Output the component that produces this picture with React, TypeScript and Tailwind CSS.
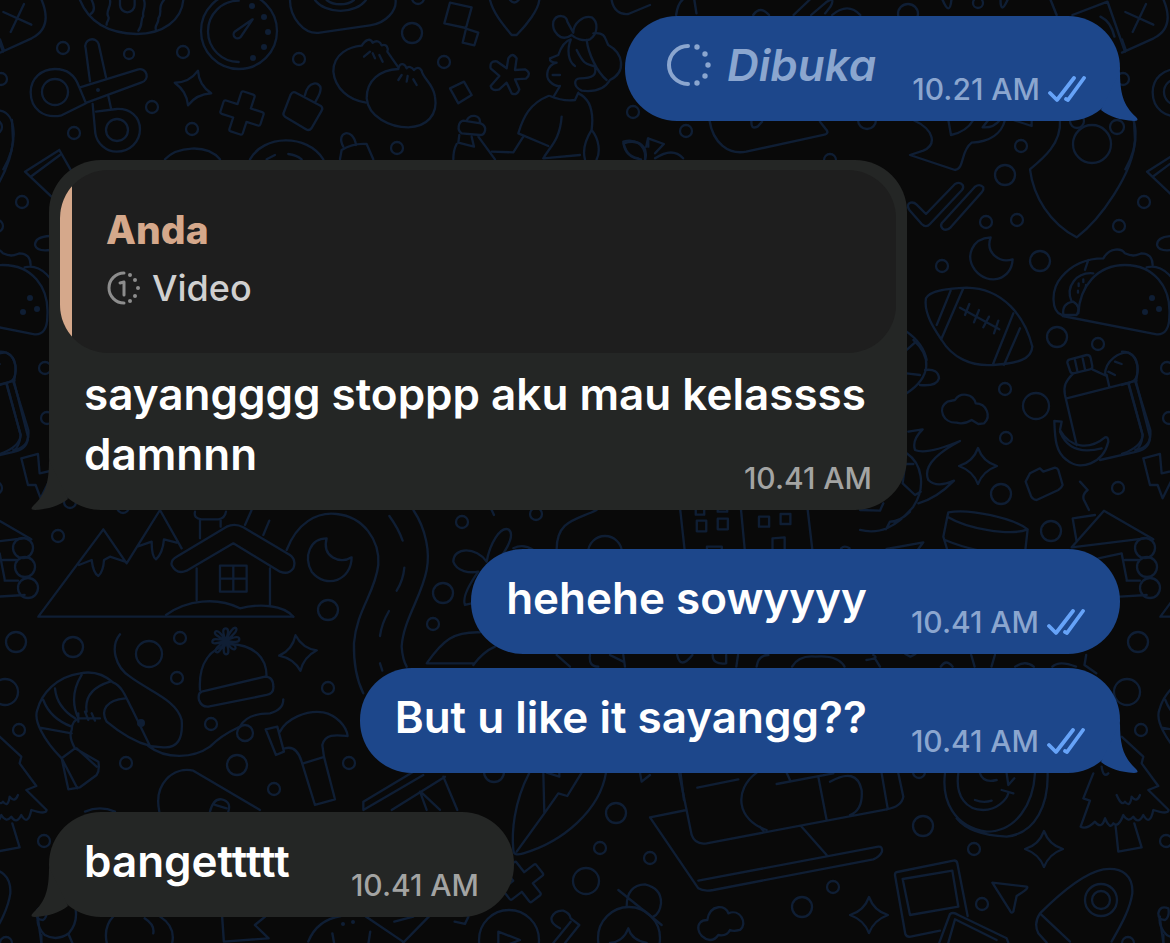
import type { ReactNode } from "react";

type Side = "in" | "out";

interface BubbleProps {
  side: Side;
  tail?: boolean;
  children: ReactNode;
}

interface MessageProps {
  text: string;
  time: string;
  side: Side;
  tail?: boolean;
}

const DOTS: [number, number, number][] = [
  [63, 48, 6], [129, 54, 5], [183, 52, 6], [299, 59, 6], [1, 79, 6], [152, 107, 6], [74, 133, 6], [192, 129, 6],
  [412, 33, 10], [444, 62, 6], [397, 148, 6], [633, 112, 6], [418, -2, 6], [686, 131, 6], [978, 3, 5], [908, 14, 10],
  [867, 120, 9], [830, 160, 6], [1021, 146, 6], [1005, 175, 10], [1092, 144, 19], [1077, 121, 7], [1117, 127, 7],
  [1144, 202, 6], [1119, 226, 6], [986, 222, 6], [1017, 220, 6], [942, 266, 6], [1040, 261, 10], [1057, 337, 10],
  [1098, 344, 6], [1005, 389, 6], [1036, 406, 13], [1006, 438, 6], [1001, 494, 10], [1118, 488, 6], [1051, 531, 10],
  [1167, 368, 6], [1169, 418, 6], [1145, 548, 10], [1147, 567, 10], [1150, 588, 10], [58, 536, 6], [328, 610, 10],
  [16, 642, 10], [73, 647, 10], [149, 654, 13], [180, 638, 6], [177, 678, 6], [328, 688, 6], [5, 692, 13],
  [19, 730, 6], [211, 724, 6], [126, 763, 6], [237, 765, 10], [274, 789, 6], [349, 763, 6], [245, 733, 8],
  [70, 502, 6], [123, 507, 6], [462, 522, 6], [536, 514, 6], [443, 593, 10], [433, 624, 6], [494, 772, 10],
  [616, 813, 10], [605, 553, 17], [600, 848, 6], [650, 858, 6], [586, 881, 13], [833, 887, 6], [802, 907, 10],
  [923, 826, 10], [974, 849, 6], [982, 904, 6], [919, 772, 6], [44, 841, 6], [6, 943, 6],
];

const STARS = [
  "translate(193 88) rotate(16)",
  "translate(978 466)",
  "translate(298 653) rotate(-8)",
  "translate(869 915)",
  "translate(1044 849)",
];

const PLUSES = ["translate(242 113) rotate(18)", "translate(523 882) rotate(52)"];

// Every sheet is drawn at three times its size and scaled down in place.
const SHEETS: { at: string; d: string[] }[] = [
  {
    at: "translate(0 0) scale(.3333)",
    d: [
      "M10 36 94 74M72 12 32 96M125 0C150 60 135 95 95 115L0 158M0 118 12 152",
      "M240 0C270 75 340 100 410 102 490 102 545 60 550 0M275 0Q290 30 272 42M330 0C335 20 315 35 325 50 330 60 318 65 320 74M432 0C440 20 425 35 430 48 420 60 430 75 415 92M492 0C470 25 490 35 475 55 478 70 462 75 468 90M360 0V15A22 22 0 0 0 404 15V0",
      "M716 2A92 92 0 0 0 716 186M758 58 704 95A12 12 0 0 0 722 111Z",
      "M870 0C870 50 910 105 960 98L1110 76C1160 70 1190 30 1187 0M945 0A86 60 0 0 0 1098 0M980 0A50 30 0 0 0 1062 0",
      "M258 310 185 346C130 358 92 325 92 277 92 235 125 207 165 207 200 207 225 225 237 260ZM240 262 415 208A20 20 0 0 1 425 247L260 308M270 244 257 145A20 20 0 0 1 296 132L318 232M278 312 286 400A66 66 0 0 0 350 455C390 455 420 425 420 388 420 350 390 325 350 327L288 335M325 288 333 325",
      "M885 277 963 318Q970 325 965 332L935 384Q928 394 918 388L855 350Q847 344 852 336L872 284Q878 274 885 277ZM915 285C925 240 960 245 962 265 962 285 950 295 945 308",
      "M495 478C530 440 620 430 660 478M750 478C790 405 920 400 970 478M800 478 825 465M865 462Q890 465 905 478",
      "M1030 440C1005 395 1060 380 1068 435M1020 478 1025 450C1050 435 1075 430 1100 432L1120 478",
      "M0 332C50 340 55 430 10 508",
    ],
  },
  {
    at: "translate(330 0) scale(.3333)",
    d: [
      "M360 8 425 22 408 84 343 70ZM408 86 445 98 433 136 398 128ZM402 245 425 285 385 310 360 265Z",
      "M480 0C490 40 520 75 545 105H560C590 75 625 30 628 0M540 0Q553 15 566 0",
      "M108 308C55 300 15 265 10 215 10 160 60 140 95 137 105 120 120 112 128 128 140 120 150 124 155 136 170 130 176 145 172 155L205 202M120 155 102 170M128 160 135 175M148 165 158 185",
      "M205 207C150 210 110 240 110 295 115 350 180 382 235 382 290 380 325 345 315 290 310 250 278 235 275 212 268 200 258 202 252 210 245 200 235 198 230 205 222 186 208 190 205 207M215 225 205 240M233 228 230 245M250 238 260 255",
      "M530 205 535 175Q547 155 560 175L555 210 585 208Q607 220 588 236L555 238 568 268Q562 288 545 280L530 248 508 268Q485 275 482 258L508 228 482 205Q478 182 500 184Z",
      "M725 105C690 130 665 90 670 65 680 40 710 45 712 65L730 98C730 70 760 45 785 52 805 65 805 100 780 118 760 125 735 115 725 105M722 118C700 125 690 150 685 165L660 175Q658 188 680 188C650 195 645 230 660 245Q675 260 690 258L672 288",
      "M790 100C830 95 825 120 835 135 880 160 890 215 840 240 820 275 780 275 755 272 730 260 730 235 750 235 790 235 800 225 795 200 770 190 765 200 740 150M770 120C775 160 800 215 830 240M722 120C710 150 715 185 735 198M668 225H690",
      "M660 288Q700 305 735 300L745 278M655 288C600 310 580 350 565 400L655 438M745 280C790 300 790 350 785 390 760 430 760 460 765 478M785 390C810 420 810 460 800 478M695 350C690 420 660 440 640 475L750 465M580 410 550 457 485 455",
      "M400 362 452 370C475 380 465 405 450 405L395 400C380 390 385 365 400 362M410 362C420 340 450 345 450 365M388 405 385 428 432 440 425 410M370 478Q370 450 380 432M445 410 495 478",
      "M880 425C910 415 950 430 945 478M880 425C885 450 895 470 925 475M955 415V440M845 0C850 30 870 45 895 42L960 15",
    ],
  },
  {
    at: "translate(620 0) scale(.3507 .3333)",
    d: [
      "M160 45Q165 10 178 0M212 0 218 40M495 45 540 0M545 45 590 5Q615 -10 600 20L585 40M605 45Q650 5 685 45M380 45Q400 15 425 45M920 0Q940 50 945 0M1085 0Q1085 45 1105 0M1228 0 1245 45M1290 45 1390 5 1440 155M1370 50Q1400 65 1410 110",
      "M255 360C265 430 310 465 360 455L580 405Q600 400 585 385L570 365M375 360Q372 390 392 380L405 365",
      "M10 430C55 415 80 440 72 478M10 430C15 465 35 475 60 478M75 440 80 415 125 432 100 460M100 475Q150 440 180 475",
    ],
  },
  {
    at: "translate(0 150) scale(.3333)",
    d: [
      "M178 0 75 65 160 145M180 15 95 78M178 0 215 65M150 258Q105 260 105 285 110 305 150 300",
      "M0 605Q45 605 47 660 45 695 25 697L0 705M20 700 62 855Q60 890 0 912M40 695 85 840Q90 895 40 900",
    ],
  },
  {
    at: "translate(880 120) scale(.3333)",
    d: [
      "M100 0C165 30 170 75 130 92L90 105 225 150C255 145 240 95 275 68 330 65 365 40 375 0M205 0 213 45Q260 35 280 0M325 0 308 22Q340 25 360 0M400 0 455 18V0",
      "M88 270Q78 252 92 248 102 246 110 254L138 282 225 192Q240 184 248 195 252 202 246 210L150 312Q138 325 125 312ZM185 310 285 200Q300 190 310 202 312 210 306 216L212 322Q200 334 188 326 180 318 185 310Z",
      "M540 0C545 70 490 115 450 148 460 230 510 310 590 352 660 300 760 160 765 60L762 0",
      "M332 352C275 355 255 410 285 450 325 500 395 480 398 418 360 430 315 400 332 352Z",
      "M138 535C150 510 210 505 260 503 370 505 435 590 457 680 455 720 410 730 340 735 270 740 215 710 185 660 165 630 130 580 138 535ZM212 512 170 615M250 505 185 655M400 580 338 735M420 625 372 735M240 563 358 628M268 552 255 585M297 570 282 607M327 590 310 622M355 602 342 640",
      "M545 585C515 575 510 510 545 470 580 430 620 415 670 415 690 380 725 385 735 400 760 412 770 405 785 400 815 400 818 425 818 435M548 588 830 643C855 645 868 625 868 590M595 580C600 500 650 435 735 435 820 435 875 500 868 590M800 442C850 430 890 480 905 530M615 450 625 420",
      "M575 545C555 500 590 455 640 460M550 585Q545 550 580 545 605 560 590 585ZM596 490V498M610 478V486M594 512V518M618 495V500",
      "M80 635Q130 670 140 720M80 690 108 665",
    ],
  },
  {
    at: "translate(860 340) scale(.3333)",
    d: [
      "M160 0C215 50 215 110 140 160M140 100 180 105M195 90Q235 85 237 115 230 140 180 135",
      "M290 248C250 250 230 205 262 185L285 180C300 155 340 160 347 190 380 190 395 230 372 250L355 252 335 240Q310 255 290 248Z",
      "M630 58 680 45Q690 44 692 54L697 78Q698 86 690 88L640 100Q632 100 630 92L622 68Q622 60 630 58ZM645 60 652 92M668 55 675 88M640 100C615 125 610 140 615 165L650 315M697 88 740 108M620 175 830 122M735 105C735 60 780 35 805 38 840 55 835 90 828 125M740 105 748 140M765 65 785 72M745 95 765 105M805 130 848 285Q845 320 825 335M828 125 870 290Q870 325 830 335L720 360",
      "M583 243 605 245 600 270C630 325 690 330 735 292Q745 290 745 305C730 370 660 395 620 360 585 335 585 290 583 243M600 275Q630 350 725 325",
      "M145 275 188 268Q155 300 165 330 200 345 300 303C220 345 190 385 205 420Q230 445 282 422 230 475 175 490M140 340C185 370 200 440 160 500 110 560 60 585 0 570M128 430 165 465 182 455M135 375 128 430M140 372H160M0 510 60 512 70 490M78 568 90 545Q120 545 150 515",
      "M497 425 510 400 540 385 550 395 585 383Q592 384 595 390L608 435Q605 444 595 450L530 480Q515 480 510 460Z",
      "M660 425 683 450Q665 465 672 480L687 510M850 355 900 342 905 400 950 390 908 475 893 435H870Z",
      "M265 517C330 505 460 535 503 568 450 590 320 565 262 530ZM262 530 250 590 262 630M503 568 495 640M255 600Q350 640 490 650M80 627 190 607 175 627",
      "M638 535 705 525M638 535 650 605M635 622 732 512 880 598M635 622 855 595M715 655 785 640 800 718M795 660H835M800 722H840M780 770 860 765",
    ],
  },
  {
    at: "translate(0 500) scale(.3333)",
    d: [
      "M880 350H115L310 88 380 190 480 30 545 145M237 195 275 180Q280 220 295 228 310 215 312 180L330 170 375 185M412 140 455 125Q455 170 468 178 488 160 492 118L530 128",
      "M600 115V60M585 35Q580 55 605 58H655Q675 55 678 35M662 60V80M530 170 680 80Q705 68 730 82L870 165Q890 180 880 205 865 225 840 215L700 130 560 212Q530 225 515 195 512 180 530 170ZM590 205V300M810 205V315M660 197H740V275H660ZM700 197V275M660 236H740M498 345C560 300 650 290 720 325 780 310 850 315 880 350M755 30 735 75M808 62 790 105",
      "M860 150C890 70 950 35 1010 42 1090 50 1140 120 1135 195 1125 280 1070 330 1062 430Q1060 520 1090 580",
      "M980 115C930 115 910 170 935 215 980 270 1055 240 1055 172 1020 195 965 170 980 115Z",
      "M360 403C330 440 345 500 390 530 450 575 530 600 545 660 550 720 530 745 490 742L445 738C500 780 580 775 630 740 670 700 700 690 720 680 735 650 770 640 810 640Q850 630 850 598",
      "M185 775C130 720 100 660 112 630 125 580 170 530 240 520 290 510 320 530 340 548 370 560 380 600 395 625L450 738C400 725 350 690 320 665 300 630 320 600 375 595M185 775 225 745 295 785Q300 810 290 825L240 862 205 868ZM185 775 232 865M230 745 290 800M225 745Q205 710 215 690 215 660 240 655L300 655M120 683 215 700M130 600Q150 655 215 680M165 565Q170 620 225 655M245 525Q205 590 235 655M330 545Q250 570 260 635M235 640V665M255 635 265 660M275 640 285 662",
      "M600 570C595 490 630 445 690 432 760 435 800 470 800 530M605 575 795 530Q820 530 820 560 822 580 800 585L625 620Q605 622 597 600 593 580 605 575",
      "M677 422C667 395 668 385 677 385 686 385 687 395 677 422 690 395 700 380 708 384 714 390 700 408 677 422 705 410 718 408 718 417 718 428 705 428 677 422 698 430 712 440 705 447 698 452 688 440 677 422 687 448 688 462 679 463 670 463 668 448 677 422 665 445 655 462 648 456 642 450 655 435 677 422 650 432 637 432 637 425 637 415 650 416 677 422 655 410 640 402 646 395 653 389 665 402 677 422",
      "M797 688 832 680 852 755 828 765ZM840 695C860 655 920 630 970 637 1010 645 1040 680 1043 708 1010 705 975 700 967 735L972 770 1005 898 945 915 905 785Q890 735 855 745M910 790 968 772",
      "M478 935C460 850 520 800 580 812L780 930M630 935Q640 895 665 898 695 905 685 935M645 915 680 925M255 935Q300 915 345 935",
    ],
  },
  {
    at: "translate(330 500) scale(.3333)",
    d: [
      "M250 30C290 90 300 160 290 210 275 290 220 360 215 440Q218 480 230 500M178 48Q205 85 218 122M223 203Q220 240 200 272M177 333Q155 370 150 408M150 490 157 512",
      "M470 185C480 130 510 80 535 88 560 105 520 170 485 200M470 185C440 140 370 140 370 185 380 215 420 220 445 215 420 250 395 290 405 315L425 310M550 145Q580 130 610 150M680 148C680 60 740 60 800 30M485 30 492 45",
      "M430 490H290C340 420 370 395 450 397M430 495Q460 455 495 440M680 465 720 500M780 465Q775 500 805 500M880 465 885 500M840 465 880 485",
      "M100 930V905L250 815M100 930 280 825M185 930 345 830M340 830 382 930M270 875 290 930M275 878 330 930",
    ],
  },
  {
    at: "translate(640 480) scale(.338 .3333)",
    d: [
      "M118 80 132 210M298 80 310 210M495 80 510 210M168 122H196V154H168ZM230 116H260V148H230ZM352 110H382V140H352ZM416 102H445V132H416ZM165 85V104H190V90M230 85V95H258V85M392 175 428 172V208M392 175V208M198 210V200H242V210M595 205Q605 195 620 205",
      "M110 525Q120 570 155 525M215 525Q215 555 255 550V525M290 525 285 560M345 560Q350 525 380 525M450 560Q470 525 520 530 585 525 605 560M670 540Q710 535 690 525M695 535 710 560M785 522 800 530 815 522M980 525 990 560M1050 525 1040 560M890 560Q905 535 925 560M1110 560Q1140 540 1165 560M1220 560Q1240 540 1290 560M1320 525 1315 555 1350 580",
      "M120 880 130 960",
    ],
  },
  {
    at: "translate(480 760) scale(.3333)",
    d: [
      "M148 38C100 130 95 220 100 270Q100 290 130 280C250 245 360 150 378 38M190 38 193 160 235 100 262 108 305 38M110 275 193 160M200 38 238 50V38",
      "M55 515 120 540 55 565ZM240 505Q210 490 215 472 225 450 250 452 270 460 272 475L298 495 255 549M220 549 272 485",
      "M440 440Q440 375 495 373 545 385 543 430 540 460 520 470M415 390 545 495M390 549Q430 545 445 505 455 540 500 549",
      "M690 540C650 535 640 480 682 480 690 430 740 435 745 460 780 445 805 490 780 510Q760 515 750 510 740 530 715 525 705 540 690 540Z",
      "M597 38 635 225Q645 255 680 250L1220 148M620 150 510 172 655 385Q670 395 700 390L1180 298Q1200 290 1206 275 1208 258 1195 260L655 362M965 200 1040 285M652 83 775 58M830 38C760 90 770 180 860 210M840 200 850 212M890 72 1060 40M1015 50 1040 180M1050 65Q1130 20 1145 90 1150 150 1110 165M480 38 485 65 510 45M920 38 930 60",
    ],
  },
  {
    at: "translate(820 760) scale(.3333)",
    d: [
      "M185 40 203 145M235 40 250 110Q245 140 200 148M375 40C365 120 400 200 500 215 590 215 640 130 645 40M410 175Q450 225 560 230C650 220 685 130 683 40M415 40C405 110 440 150 490 150 530 150 560 120 565 100M480 40Q490 70 530 60M465 120Q490 130 515 122M560 40 565 75 583 55M545 90 580 100",
      "M905 -70 970 -10 965 10 1015 78 985 90 1046 150Q1045 165 1000 150 990 200 970 165 955 195 940 170 925 190 910 165 895 205 880 190 870 210 855 175 845 210 825 185 800 210 782 200L810 122 790 115 820 40M887 200 895 275 965 262 943 190M890 105Q905 140 915 125 930 145 935 110 950 130 960 105M845 20Q850 55 865 40",
      "M443 468 412 310Q410 300 400 302L232 336Q224 338 225 346L256 522Q260 532 272 530L360 512M248 357 397 332 415 440 270 465ZM358 548 390 462Q400 455 415 465L560 535 565 548M385 548 405 478 530 540",
      "M517 368 620 380Q630 384 590 408L580 455Q575 462 570 452Z",
      "M875 545C900 500 930 450 937 400 940 350 910 320 850 328 790 340 720 400 660 460L750 545M660 460Q640 490 655 520L680 548",
      "M1020 475 1030 548M1015 460Q1020 435 1045 445 1050 470 1035 480 1015 480 1015 460",
    ],
  },
  {
    at: "translate(0 760) scale(.3444 .3333)",
    d: [
      "M110 470Q105 500 130 525 165 545 200 520 225 490 220 450M120 525V549M200 525 210 549M310 549Q300 500 330 468M420 475Q450 495 445 520M465 470Q510 500 500 549",
      "M645 470 650 545 780 535 740 495 770 470M895 545Q920 480 990 468M1060 468 1170 545M1145 485 1200 470M1170 549 1245 470M965 520 970 549M1075 515 1070 549M1320 485 1350 492 1360 470",
    ],
  },
];

function Wallpaper() {
  return (
    <svg
      aria-hidden="true"
      viewBox="0 0 1170 943"
      preserveAspectRatio="xMidYMin slice"
      className="absolute inset-0 h-full w-full"
      fill="none"
      stroke="#0f1e34"
      strokeLinecap="round"
      strokeLinejoin="round"
    >
      <g id="doodles" strokeWidth="2.3">
        {SHEETS.map((sheet) => (
          <g key={sheet.at} transform={sheet.at} strokeWidth="7">
            {sheet.d.map((d) => (
              <path key={d} d={d} />
            ))}
          </g>
        ))}
        {DOTS.map(([x, y, r]) => (
          <circle key={`${x}-${y}`} cx={x} cy={y} r={r} />
        ))}
        {STARS.map((at) => (
          <path key={at} transform={at} d="M0-18Q5-4 19 0 5 5 0 18-5 5-19 0-5-4 0-18Z" />
        ))}
        {PLUSES.map((at) => (
          <path
            key={at}
            transform={at}
            d="M-5-21H5Q7-21 7-19V-7H19Q21-7 21-5V5Q21 7 19 7H7V19Q7 21 5 21H-5Q-7 21-7 19V7H-19Q-21 7-21 5V-5Q-21-7-19-7H-7V-19Q-7-21-5-21Z"
          />
        ))}
        <circle cx="55" cy="92" r="13" />
        <circle cx="117" cy="130" r="11" />
        <circle cx="239" cy="31" r="38" />
        <circle cx="509" cy="940" r="30" />
        <circle cx="629" cy="938" r="31" />
        <circle cx="1101" cy="900" r="16" />
        <circle cx="1101" cy="900" r="9" />
        <g fill="#0f1e34" stroke="none">
          <circle cx="252" cy="6" r="3" />
          <circle cx="264" cy="17" r="3" />
          <circle cx="268" cy="32" r="3" />
          <circle cx="264" cy="47" r="3" />
          <circle cx="253" cy="58" r="3" />
          <circle cx="98" cy="90" r="2" />
          <circle cx="1152" cy="298" r="3" />
          <circle cx="1145" cy="312" r="3" />
          <circle cx="1159" cy="309" r="3" />
          <circle cx="141" cy="723" r="4" />
          <circle cx="343" cy="924" r="2" />
          <circle cx="353" cy="922" r="2" />
        </g>
      </g>
      <use href="#doodles" x="1122" />
      <use href="#doodles" x="-1122" />
    </svg>
  );
}

function Tail({ side }: { side: Side }) {
  return (
    <svg
      aria-hidden="true"
      viewBox="0 0 42 50"
      className={
        side === "out"
          ? "absolute -right-5 bottom-0 h-[50px] w-[42px] fill-[#1d478b]"
          : "absolute -left-5 bottom-0 h-[50px] w-[42px] -scale-x-100 fill-[#242625]"
      }
    >
      <path d="M22 0C22 22 25 34 38 46Q42 50 36 50C22 49 12 46 3 39Z" />
    </svg>
  );
}

function Bubble({ side, tail, children }: BubbleProps) {
  return (
    <li
      className={
        side === "out"
          ? "relative max-w-[858px] min-w-[465px] self-end rounded-[52px] bg-[#1d478b]"
          : "relative max-w-[858px] min-w-[465px] self-start rounded-[52px] bg-[#242625]"
      }
    >
      {children}
      {tail && <Tail side={side} />}
    </li>
  );
}

function Ticks() {
  return (
    <svg
      role="img"
      aria-label="Dibaca"
      viewBox="0 0 38 27"
      className="h-[27px] w-[38px]"
      fill="none"
      stroke="#66a3f8"
      strokeWidth="3.8"
      strokeLinecap="round"
      strokeLinejoin="round"
    >
      <path d="M2 17 9 24 26 2M18 23 20 24 36 2" />
    </svg>
  );
}

function Stamp({ time, side }: { time: string; side: Side }) {
  return (
    <span className="flex shrink-0 items-center gap-2">
      <time
        className={
          side === "out"
            ? "text-[30px] leading-9 font-medium text-[#8ba6cf]"
            : "text-[30px] leading-9 font-medium text-[#a3a4a3]"
        }
      >
        {time}
      </time>
      {side === "out" && <Ticks />}
    </span>
  );
}

function OpenedIcon() {
  return (
    <svg aria-hidden="true" viewBox="0 0 44 44" className="size-11 shrink-0" fill="#8ba6cf">
      <path d="M21 3A19 19 0 0 0 21 41" fill="none" stroke="#8ba6cf" strokeWidth="4" strokeLinecap="round" />
      <circle cx="30" cy="4" r="2.7" />
      <circle cx="38" cy="11" r="2.7" />
      <circle cx="41" cy="22" r="2.7" />
      <circle cx="38" cy="33" r="2.7" />
      <circle cx="30" cy="40" r="2.7" />
    </svg>
  );
}

function ViewOnceIcon() {
  return (
    <svg aria-hidden="true" viewBox="0 0 34 34" className="size-[34px] shrink-0" fill="#8d8d8d">
      <path d="M18 2A15 15 0 0 0 18 32" fill="none" stroke="#8d8d8d" strokeWidth="3" strokeLinecap="round" />
      <circle cx="24" cy="4" r="2" />
      <circle cx="29" cy="9" r="2" />
      <circle cx="32" cy="17" r="2" />
      <circle cx="29" cy="25" r="2" />
      <circle cx="24" cy="30" r="2" />
      <path
        d="M14 12 18 11V24"
        fill="none"
        stroke="#8d8d8d"
        strokeWidth="3"
        strokeLinecap="round"
        strokeLinejoin="round"
      />
    </svg>
  );
}

function Line({ text, time, side }: MessageProps) {
  return (
    <div className="flex items-end justify-between gap-11">
      <p className="mb-3 text-[44px] leading-[60px] font-semibold text-white">{text}</p>
      <Stamp time={time} side={side} />
    </div>
  );
}

function TextMessage({ text, time, side, tail }: MessageProps) {
  return (
    <Bubble side={side} tail={tail}>
      <div className="px-[35px] pt-[19px] pb-[14px]">
        <Line text={text} time={time} side={side} />
      </div>
    </Bubble>
  );
}

export default function App() {
  return (
    <main className="relative min-h-screen overflow-hidden bg-[#090909] font-['Inter',sans-serif]">
      <Wallpaper />
      <ol className="relative flex flex-col gap-[39px] pt-4 pr-[50px] pb-6 pl-[49px]">
        <Bubble side="out" tail>
          <div className="flex items-end justify-between gap-9 pt-[19px] pr-[34px] pb-[14px] pl-[42px]">
            <p className="mb-3 flex items-center gap-4 text-[44px] leading-[60px] font-semibold text-[#8ba6cf] italic">
              <OpenedIcon />
              Dibuka
            </p>
            <Stamp time="10.21 AM" side="out" />
          </div>
        </Bubble>

        <Bubble side="in" tail>
          <div className="w-[858px] max-w-full px-[11px] pt-[10px]">
            <blockquote className="overflow-hidden rounded-[48px] bg-[#1e1e1e]">
              <div className="border-l-12 border-[#d5a88b] px-[34px] pt-[35px] pb-9">
                <cite className="block text-[39px] leading-[50px] font-extrabold text-[#d5a88b] not-italic">Anda</cite>
                <p className="flex items-center gap-3 pt-2 pb-1 text-[36px] leading-[50px] font-medium text-[#d0d0d0]">
                  <ViewOnceIcon />
                  Video
                </p>
              </div>
            </blockquote>
          </div>
          <div className="px-[35px] pt-[11px] pb-[14px]">
            <p className="text-[44px] leading-[60px] font-semibold text-white">sayangggg stoppp aku mau kelassss</p>
            <Line text="damnnn" time="10.41 AM" side="in" />
          </div>
        </Bubble>

        <li>
          <ol className="flex flex-col gap-[14px]">
            <TextMessage side="out" text="hehehe sowyyyy" time="10.41 AM" />
            <TextMessage side="out" tail text="But u like it sayangg??" time="10.41 AM" />
          </ol>
        </li>

        <TextMessage side="in" tail text="bangettttt" time="10.41 AM" />
      </ol>
    </main>
  );
}
